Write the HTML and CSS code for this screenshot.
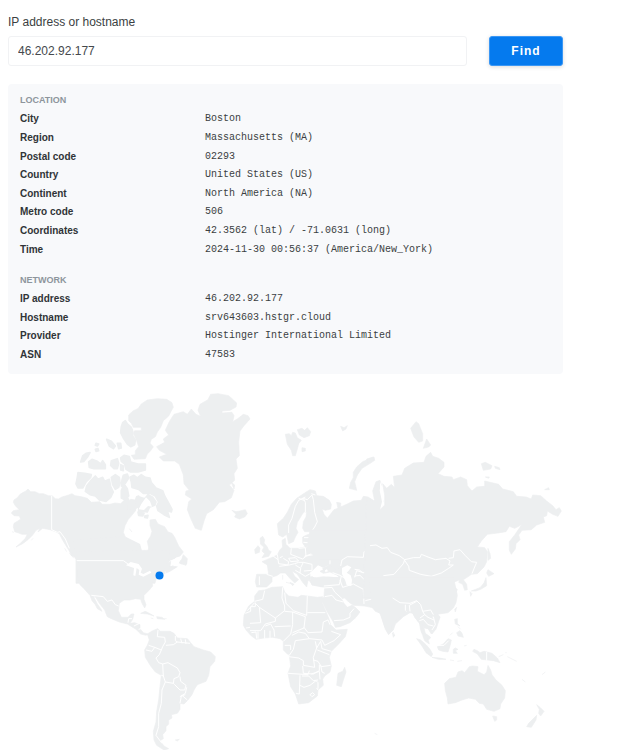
FILE: index.html
```html
<!DOCTYPE html>
<html lang="en">
<head>
<meta charset="utf-8">
<title>IP lookup</title>
<meta name="viewport" content="width=device-width, initial-scale=1">
<link rel="stylesheet" href="styles.css">
</head>
<body>
<main class="page">
  <form class="search">
    <label class="search-label" for="host">IP address or hostname</label>
    <input class="search-input" id="host" type="text" value="46.202.92.177">
    <button class="search-button" type="button">Find</button>
  </form>

  <section class="card">
    <h2 class="card-title">Location</h2>
    <table class="facts facts-location">
      <tr><th scope="row">City</th><td>Boston</td></tr>
      <tr><th scope="row">Region</th><td>Massachusetts (MA)</td></tr>
      <tr><th scope="row">Postal code</th><td>02293</td></tr>
      <tr><th scope="row">Country</th><td>United States (US)</td></tr>
      <tr><th scope="row">Continent</th><td>North America (NA)</td></tr>
      <tr><th scope="row">Metro code</th><td>506</td></tr>
      <tr><th scope="row">Coordinates</th><td>42.3562 (lat) / -71.0631 (long)</td></tr>
      <tr><th scope="row">Time</th><td>2024-11-30 00:56:37 (America/New_York)</td></tr>
    </table>
    <h2 class="card-title">Network</h2>
    <table class="facts facts-network">
      <tr><th scope="row">IP address</th><td>46.202.92.177</td></tr>
      <tr><th scope="row">Hostname</th><td>srv643603.hstgr.cloud</td></tr>
      <tr><th scope="row">Provider</th><td>Hostinger International Limited</td></tr>
      <tr><th scope="row">ASN</th><td>47583</td></tr>
    </table>
  </section>

  <svg class="map" viewBox="8 385 555 365" aria-hidden="true">
    <!-- Alaska and western Canada -->
    <g transform="translate(0 385) scale(.33333)">
      <path class="land" d="M42 345L52 338 60 328 70 322 78 318 84 312 92 320 105 320 118 326 130 326 145 332 157 333 166 341 175 342 186 336 196 333 206 330 216 326 225 332 237 334 248 336 262 340 274 352 300 350 306 358 330 358 345 354 362 356 372 346 384 338 392 352 402 362 408 375 398 388 385 403 375 422 370 442 376 456 396 466 420 478 430 570 234 570 233 545 236 526 226 517 214 512 208 498 198 482 186 462 178 446 166 440 150 434 128 430 114 441 120 430 108 436 98 450 84 464 68 476 48 486 62 474 76 460 82 448 66 448 56 444 44 440 40 425 42 415 54 408 62 402 58 393 42 392 34 384 40 377 58 374 46 362 40 352Z"/>
      <path class="land" d="M36 440L42 442M94 466L99 460M194 490L200 500M208 504L222 520"/>
      <path class="border" d="M155 333V434L172 442 180 440 196 462 208 490M236 526H370L386 532"/>
    </g>
    <!-- Canadian archipelago and the east coast -->
    <g transform="translate(70 390) scale(.33333)">
      <path class="land" d="M176 75L190 62 204 56 214 42 232 30 262 26 290 28 306 38 310 52 302 66 296 78 280 92 272 112 262 126 256 140 244 148 240 160 250 170 242 182 232 192 226 206 192 208 184 196 196 194 196 182 206 170 200 152 190 130 194 122 214 122 214 112 190 112 184 100 176 92Z"/>
      <path class="land islands" d="M158 98L166 92 172 102 184 112 188 124 188 138 196 150 194 164 182 170 172 162 160 144 152 128 154 110ZM32 216L38 198 48 190 60 188 52 202 42 214ZM110 148L124 154 136 168 130 176 118 168ZM142 160L152 160 154 174 146 176ZM78 160L86 162 82 168 76 166ZM76 178L84 176 86 182 78 184ZM56 216L66 208 82 214 92 222 98 212 106 224 106 236 86 236 72 236 58 232ZM124 212L142 206 146 220 142 236 132 236 122 226ZM152 204L162 196 178 200 182 216 204 222 226 222 226 240 204 246 182 246 168 238 164 222 154 214ZM152 224L160 228 160 242 152 240Z"/>
      <path class="land islands" d="M24 248L44 250 64 254 62 262 48 276 38 294 24 294 18 282 22 262ZM50 288L64 270 76 258 84 268 98 262 104 274 118 268 122 290 130 306 122 322 108 334 88 330 76 318 60 314 46 304ZM124 262L136 254 148 262 150 278 146 292 136 298 128 284ZM160 256L172 252 176 264 166 280 154 288 156 270ZM154 302L162 282 172 296 176 318 166 330 154 324Z"/>
      <path class="land islands" d="M180 262L192 256 202 264 214 254 226 262 240 264 244 278 258 294 278 302 284 318 294 336 306 358 304 366 292 362 298 382 282 374 264 362 260 348 266 336 256 318 240 310 220 310 206 298 186 292 184 276ZM204 366L222 370 218 378 206 376ZM224 378L234 376 232 384 224 382ZM200 320L206 318 206 348 196 356 192 346ZM206 320L224 326 234 314 248 322 258 336 254 346 238 352 232 366 206 362Z"/>
      <path class="sea" d="M228 322L240 334 246 350 234 348 222 360 206 358 214 342Z"/>
      <path class="land" d="M182 328L196 330 194 344 182 356 170 360 170 345Z"/>
      <path class="land" d="M240 390L256 388 264 402 284 410 294 426 306 430 314 442 326 468 340 486 330 498 300 512 290 528 268 542 260 560 255 580 18 580 18 510 10 450 160 440 200 462 210 468 216 484 224 494 232 492 236 474 232 454 242 438 246 424 240 406ZM334 510L340 494 352 506 350 522 334 522 322 516ZM276 536L290 524 306 518 310 530 322 530 300 544 284 550 270 560 264 550Z"/>
      <path class="sea" d="M170 516L182 512 198 516 212 528 222 542 218 548 204 532 200 556 194 558 190 538 176 528Z"/>
      <path class="border" d="M26 511H160L176 518M204 528L222 538 220 556 240 554M240 548L268 536 284 532 300 514 326 504M286 530V548"/>
      <path class="land" d="M178 416L186 426"/>
    </g>
    <!-- Greenland and Iceland -->
    <g transform="translate(130 385) scale(.33333)">
      <path class="land" d="M80 185L104 172 100 162 116 150 106 136 118 110 132 88 160 80 172 88 184 72 198 88 212 94 204 76 210 58 234 44 242 28 264 26 296 32 320 54 318 66 300 76 276 78 276 84 306 82 312 92 308 110 322 102 340 88 354 92 360 102 342 122 330 138 326 170 328 212 318 222 322 250 312 266 314 286 298 300 312 316 304 338 284 350 268 352 250 374 230 386 222 408 214 436 196 430 182 400 172 374 176 350 186 342 166 330 168 318 178 316 162 296 160 270 148 238 134 228 100 228 88 216 110 208 88 196ZM304 292L314 300 312 312ZM306 376L318 380 330 378 346 374 352 386 344 396 328 402 314 396 318 388Z"/>
    </g>
    <!-- United States, Mexico and South America -->
    <g transform="translate(60 550) scale(.33333)">
      <path class="land" d="M36 10L60 4 330 0 322 52 292 74 290 86 276 96 278 108 266 122 252 136 252 148 258 164 254 174 246 160 242 148 226 146 210 150 192 150 178 160 175 182 184 202 204 202 214 192 222 192 218 208 210 220 224 218 240 224 240 236 250 248 264 252 258 256 242 252 228 238 212 228 202 222 178 216 154 206 142 200 134 180 118 160 106 140 100 136 104 146 112 162 122 176 126 184 112 176 106 164 96 152 90 136 72 116 60 104 54 84 54 58 60 44 52 32Z"/>
      <path class="sea" d="M198 46L212 36 236 42 246 56 242 68 250 72 270 62 274 68 250 80 236 74 238 60 230 54 226 78 220 76 222 54Z"/>
      <path class="sea" d="M326 50L334 36 350 22 366 22 356 40 340 46Z"/>
      <path class="land" d="M316 44L332 34 330 50 348 50 324 66 312 62ZM372 26L380 38 378 46 362 40ZM242 190L256 184 272 192 282 198 262 192ZM290 200L306 202 314 208 292 206ZM272 204L280 206M312 206H320"/>
      <path class="land" d="M262 252L278 242 294 236 300 244 330 244 342 250 352 264 382 266 392 278 402 290 430 300 452 306 466 320 464 334 450 350 446 376 438 394 412 404 402 420 396 434 382 452 372 462 360 460 360 478 352 490 334 494 336 504 326 510 326 522 318 530 318 542 308 554 310 566 300 572 312 588 326 596 312 600 290 586 282 570 280 544 288 516 290 484 296 450 300 410 304 376 286 366 272 348 256 322 254 300 262 286 268 270ZM346 570L358 568 352 573Z"/>
      <path class="border" d="M50 32H190L204 42M94 136L130 140 142 154 156 150 166 164 176 168M204 218L206 206 216 206M222 228L238 220M236 238L242 236M294 240L292 260 314 262 316 276 308 290 304 300 284 292 266 286M346 258L346 272 352 276 340 284 318 286M362 266L366 280M376 268L378 282M352 276L390 280M258 300L276 304 284 292M304 300L298 314 288 324 296 338 308 342 310 378 304 376M308 342L324 338 352 354 360 368 356 380 342 386 340 400 316 396 310 378M360 380L362 394 378 406 374 420 360 420 344 404 340 400M316 396L306 420 304 460 296 490 296 530 288 556 306 580M380 412L376 430 360 440M376 434L364 438 360 460M366 436L382 450"/>
    </g>
    <circle class="pin" cx="159.5" cy="575.5" r="4"/>
    <!-- Europe's northern islands, Scandinavia and Britain -->
    <g transform="translate(230 385) scale(.33333)">
      <path class="land" d="M166 148L178 146 184 152 188 142 196 144 202 158 214 166 206 176 202 192 196 212 188 212 184 196 172 178ZM202 134L216 130 224 136 232 128 242 140 238 152 222 158 208 150ZM216 188L226 190 226 198 216 200ZM332 124L342 128 352 122 348 132 338 138ZM432 216L434 226 416 238 396 250 382 270 374 290 380 316 358 310 362 292 370 278 370 262 380 246 398 230Z"/>
      <path class="land" d="M142 416L160 400 172 382 184 358 200 340 224 324 240 314 256 318 260 332 280 334 298 346 304 358 302 372 286 376 276 372 282 388 292 400 298 392 312 374 324 370 320 352 332 354 332 366 350 358 370 348 394 346 400 334 414 336 430 346 450 354 460 630 354 610 330 590 300 570 296 562 276 558 250 556 240 560 240 584 250 590 234 586 230 606 218 592 206 574 200 566 186 558 194 574 206 584 194 594 178 578 166 564 152 564 140 572 126 576 126 590 110 606 80 606 76 590 80 568 116 568 112 540 96 530 124 518 142 510 150 494 158 486 156 466 166 460 168 478 180 490 204 490 226 486 218 474 218 456 230 450 246 446 248 440 224 440 218 430 220 410 228 396 230 382 222 380 214 392 202 412 198 430 204 442 196 456 190 470 176 476 170 448 158 456 146 450Z"/>
      <path class="sea" d="M252 560L260 546 284 548 298 562 316 570 300 580 264 574Z"/>
      <path class="land" d="M90 460L98 454 104 464 102 474 112 486 116 496 124 500 116 514 96 518 104 506 96 498 102 486 92 478ZM74 494L84 482 90 490 88 502 76 506ZM168 592L192 598M158 570L158 584M240 576L262 572 300 576 320 576 320 602 276 606 246 600ZM180 592L192 598 188 602Z"/>
      <path class="border" d="M176 444L176 420 186 400 196 364 206 346 226 336M226 382L226 352 220 340 232 344 246 330 250 344 254 382 262 410 254 426 244 440M206 340L222 346M256 330L244 326M248 448L246 464 258 478 264 496 240 508 224 514M222 458H244M220 472L244 474M206 490L226 488 228 514 218 522 182 508 184 490M224 514L264 506 274 516 300 522 300 540 284 548M230 486L246 474M150 518L158 514M142 508L146 536 174 540 176 530 160 520M176 520L196 518 206 528 182 530 176 520M148 544L178 540 194 536 206 532 220 532 246 538 246 556 222 558M196 540L212 550 210 564 196 556M220 532L212 548M210 564L226 574 244 564M128 512L144 524M110 568L128 574M88 574V600"/>
    </g>
    <!-- Mediterranean, Middle East and Central Asia -->
    <g transform="translate(240 530) scale(.33333)">
      <path class="land" d="M210 0H610V222L590 230 585 240 600 262 590 292 576 312 570 298 556 292 548 280 556 310 572 322 566 330 546 308 542 284 532 272 518 250 510 248 490 260 466 282 460 300 446 312 434 290 420 250 408 242 402 234 374 228 340 226 326 216 314 204 304 206 312 220 322 232 336 226 346 232 360 246 348 262 330 278 300 290 286 292 280 276 262 246 250 222 244 210 252 200 254 172 240 168 216 164 210 154 218 144 232 138 220 110 240 120 272 102 276 122 304 136 314 144 296 120 300 90 240 90 200 60Z"/>
      <path class="sea" d="M218 140L216 124 234 106 244 110 252 124 264 114 282 124 296 142 264 140 232 144Z"/>
      <path class="land" d="M240 124L252 118 256 128 266 124 258 114 276 110 300 132 292 136 270 126 250 130Z"/>
      <path class="sea" d="M306 114L322 106 334 112 326 122 320 128 332 136 336 150 334 168 320 166 316 152 306 132Z"/>
      <path class="land" d="M460 306L464 318M212 156L224 144 250 140 300 144 312 150 312 168 254 172Z"/>
      <path class="border" d="M302 108L306 90 322 80 370 82 372 66 410 46 426 54 442 48 452 66 488 90 484 102 462 120 458 134 432 134 420 142 400 144 384 132 350 122 344 142M344 118L358 120 368 128 388 128 396 140 412 152 432 144 434 160 402 156 400 144M344 138L360 136 374 150 396 168 410 164 438 166M494 92L530 82 544 74 560 82 600 88M494 92L516 106 524 126 556 136 600 138M438 164L452 182 462 206 480 216 512 216 536 212 550 238M432 168L440 186 424 196 406 226 404 236M300 150L308 172 340 162 370 178 372 222M370 178L394 164M376 212L400 206 416 180 438 176M250 174L276 172 284 186 306 206M254 200L276 196 288 210 310 216M282 272L310 270 330 262 330 250 342 236M496 226L498 246M518 250L514 230 540 214M544 250L562 240 582 250 574 266 558 262 548 276M252 168L298 164 304 138M278 128L300 136 314 144"/>
    </g>
    <!-- Siberia, China and Japan -->
    <g transform="translate(370 385) scale(.33333)">
      <path class="land" d="M-10 340L8 350 14 348 8 318 18 290 30 286 34 300 28 316 40 350 30 374 44 360 44 330 38 296 50 310 64 298 74 308 70 274 96 270 104 250 130 234 162 232 168 214 182 202 188 214 206 220 222 232 222 246 204 266 222 274 246 276 250 284 272 276 290 284 292 302 306 318 320 306 344 304 344 288 386 298 398 312 430 320 440 334 468 336 484 342 488 330 512 332 530 348 548 362 558 374 568 368 574 378 564 394 548 388 532 378 530 392 520 396 524 412 500 420 484 434 456 436 446 450 450 464 438 476 436 492 424 508 418 496 418 470 434 450 456 418 446 424 434 430 418 424 408 440 384 444 352 448 334 468 322 486 344 488 352 500 350 530 342 546 322 566 304 568 296 574 280 584 290 598 292 614 284 616 278 598 266 592 270 584 246 594 254 606 262 614 250 640 -20 640Z"/>
      <path class="land" d="M122 130L138 110 146 116 158 146 158 168 146 172 132 156ZM170 162L182 180 176 186 160 190ZM334 236L346 232 366 242 362 252 340 256ZM374 244L388 248 390 254 376 250ZM346 276L358 276 356 280ZM524 314L536 308 538 314ZM-10 222L10 216 12 224 -10 234ZM354 490L360 506 362 520 354 526ZM350 564L354 554 372 566 356 574ZM348 578L350 602 334 612 318 618 304 618 330 608 342 594ZM300 620L306 626 302 634Z"/>
      <path class="sea" d="M30 290L38 310 38 335 42 355 30 374 36 350 30 320Z"/>
      <path class="border" d="M0 482L18 480 36 490 52 488 62 502 88 512 104 524 100 536 72 568 40 572M104 524L130 518 150 518 154 508 174 516 196 524 228 520 240 528 236 540 250 540 236 550 214 564 184 574 152 568 118 556 116 544 104 526M236 520L250 518 252 498 270 494 286 512 304 530 320 532 314 546 306 566"/>
    </g>
    <!-- Africa -->
    <g transform="translate(230 570) scale(.33333)">
      <path class="land" d="M74 78L86 62 104 60 126 52 158 50 164 66 176 78 204 82 214 76 232 78 262 82 278 80 276 96 286 120 296 144 302 164 318 180 352 178 346 200 326 222 304 244 298 262 304 288 300 306 284 318 278 328 280 346 264 360 262 378 236 398 206 402 196 372 182 350 174 310 182 288 178 258 160 240 160 214 150 206 128 202 102 204 78 208 62 196 48 180 40 166 42 136 56 108 74 94ZM344 292L348 306 340 330 334 350 320 346 322 328 324 310 338 304Z"/>
      <path class="border" d="M74 94L98 88 104 62M74 98L52 122M76 100L88 112 92 158 60 160M88 112L136 144 164 122 164 108 156 84 158 52M76 98V110H62V124L46 130M164 68L168 100 190 122 230 136 232 78M232 128H286M136 144L136 154 106 162 92 182 60 182M106 168L122 162 132 180 134 200M164 124L188 126 188 164 182 192 160 214M134 170L182 168M188 126L226 140 222 174 188 188M222 172L234 188 276 186 280 156 294 150 300 164M186 196L206 186 226 190 238 206 276 210 284 226 312 212 332 194 304 184M238 206L196 212 190 238 178 256 160 254M164 226L182 226 182 240M176 260L206 264 220 272 220 286 254 292 250 262 260 234 256 214M260 234L272 214 276 236 304 244M262 240L298 254M250 270L264 274 274 290 302 286M272 286L276 306 284 310M218 288L220 310 250 312 268 302 268 284M174 310L234 314 238 302M210 316L208 372 198 370M210 346L222 352 240 346 258 332 264 338 264 356M216 318L236 318 250 332 264 330M244 312L268 304 270 328M84 184V206M104 180V206M120 182V204M64 188L78 186 80 206M48 174L60 172M240 374L248 368 254 374 246 380 240 374M260 354L264 360"/>
    </g>
    <!-- South-east Asia and Oceania -->
    <g transform="translate(370 570) scale(.33333)">
      <path class="land" d="M-5 20H250L262 76 258 98 250 114 234 128 208 132 194 134 186 142 200 164 198 178 184 192 174 176 162 174 158 164 156 182 166 196 174 208 178 222 164 212 158 196 152 180 148 158 134 142 130 132 120 124 108 122 100 136 76 152 66 166 66 182 56 194 46 178 38 150 32 130 16 124 8 114Z"/>
      <path class="land" d="M67 188L74 196 70 202ZM140 206L152 210 168 224 180 238 188 252 184 260 168 248 156 228ZM186 262L208 264 228 268 206 268ZM240 270L252 272M262 274L276 272M202 230L220 222 234 206 244 210 240 228 234 246 218 244 206 240ZM250 238L256 234 264 238 256 242 262 250 250 250ZM254 118L260 112 256 126ZM202 142L210 140 206 146ZM254 148L262 146 262 160 270 168 256 162ZM260 188L270 182 276 190 280 202 264 198ZM264 170L272 178M248 188L240 196M312 238L322 242 330 248 342 244 366 250 382 264 390 278 370 272 352 270 334 268 322 252 308 244ZM386 260L400 254M406 248H410M412 260L440 274M456 328L466 336M516 314L526 306M282 228L290 226M14 490L22 494"/>
      <path class="land" d="M224 340L238 326 258 322 264 306 276 302 284 308 298 290 308 288 324 290 322 304 342 314 350 306 354 286 362 300 366 314 378 330 396 346 406 362 404 384 392 402 390 416 372 424 350 418 340 402 328 400 316 388 296 384 276 390 256 398 234 402 232 384 226 362ZM368 438L380 440 380 450 374 454ZM500 404L510 412 522 424 512 438 506 430 508 418ZM500 436L498 450 484 472 470 470 476 460Z"/>
      <path class="border" d="M68 84L90 98 120 100 140 92 152 104 158 124 182 120 190 134M106 104V122M120 124L118 106 140 94M150 144L164 134 174 142 192 150M164 134L158 124M148 152L160 148 174 164 190 168M190 140L196 164 186 180M204 226L222 226 236 212M350 246V272"/>
    </g>
  </svg>
</main>
</body>
</html>
```
FILE: styles.css
```css
* {
  box-sizing: border-box;
}

body {
  margin: 0;
  background: #fff;
  color: #3b3f42;
  font-family: "Liberation Sans", Arial, sans-serif;
  font-size: 12px;
}

.page {
  padding: 15px 76px 0 8px;
}

.search {
  display: grid;
  grid-template-columns: 1fr 74px;
  gap: 6px 22px;
}

.search-label {
  grid-column: 1 / -1;
  line-height: 15px;
}

.search-input {
  width: 100%;
  height: 30px;
  padding: 0 9px;
  border: 1px solid #f1f2f4;
  border-radius: 3px;
  background: #fff;
  color: #45494d;
  font: inherit;
}

.search-button {
  height: 30px;
  padding: 0;
  border: 1px solid #3a97f5;
  border-radius: 3px;
  background: #057aee;
  box-shadow: 0 1px 4px rgba(0, 0, 0, 0.15);
  color: #fff;
  font: inherit;
  font-weight: bold;
  letter-spacing: 1px;
}

.card {
  margin-top: 18px;
  padding: 7px 12px 10px;
  border-radius: 4px;
  background: #f8f9fb;
}

.card-title {
  margin: 0 0 1px;
  color: #8d959c;
  font-size: 9px;
  line-height: 18px;
  text-transform: uppercase;
}

.facts {
  width: 100%;
  border-collapse: collapse;
  font-size: 10px;
  line-height: 18px;
}

.facts-location {
  height: 149px;
  margin-bottom: 12px;
}

.facts-network {
  height: 74px;
}

.facts th,
.facts td {
  padding: 0;
  text-align: left;
}

.facts th {
  width: 185px;
  color: #303437;
}

.facts td {
  font-family: "Liberation Mono", monospace;
}

.map {
  display: block;
  width: 100%;
  height: auto;
  margin-top: 11px;
}

.land {
  fill: #edeff0;
  stroke: #edeff0;
  stroke-width: 2;
  stroke-linejoin: round;
}

.islands {
  stroke-width: 5;
}

.sea {
  fill: #fff;
}

.border {
  fill: none;
  stroke: #fff;
  stroke-width: 3;
  stroke-linejoin: round;
}

.pin {
  fill: #057aee;
}
```
